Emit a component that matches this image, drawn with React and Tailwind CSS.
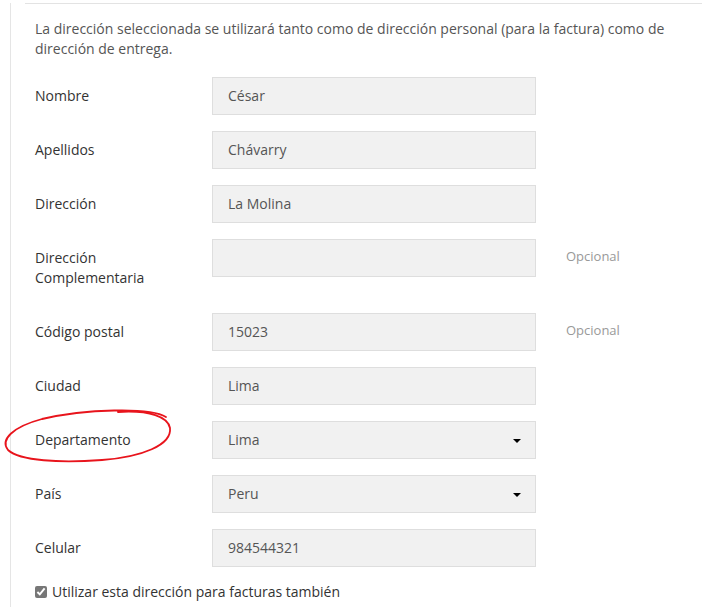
import { useState } from "react";

const campos = [
    { label: "Nombre", value: "César" },
    { label: "Apellidos", value: "Chávarry" },
    { label: "Dirección", value: "La Molina" },
    { label: "Dirección Complementaria", value: "", opcional: true, alto: true },
    { label: "Código postal", value: "15023", opcional: true },
    { label: "Ciudad", value: "Lima" },
    { label: "Departamento", value: "Lima", select: true },
    { label: "País", value: "Peru", select: true },
    { label: "Celular", value: "984544321" },
];

function Campo({ campo }) {
    return (
        <div className={`flex items-start ${campo.alto ? "h-[58px] mb-[16px]" : "mb-[16px]"}`}>
            <label className="w-[177px] pt-[9px] pr-4 leading-[20px] text-[#333]">
                {campo.label}
            </label>
            <div className="relative w-[324px] h-[38px] bg-[#f1f1f1] border border-[#dedede] flex items-center pl-[15px] text-[#555]">
                <span className="leading-[20px]">{campo.value}</span>
                {campo.select && (
                    <span className="absolute right-[14px] top-[17px] w-0 h-0 border-l-[4px] border-r-[4px] border-t-[4px] border-l-transparent border-r-transparent border-t-black" />
                )}
            </div>
            {campo.opcional && (
                <span className="ml-[30px] pt-[7px] text-[13px] leading-[20px] text-[#999]">Opcional</span>
            )}
        </div>
    );
}

export default function App() {
    const [facturas, setFacturas] = useState(true);

    return (
        <div className="relative w-[702px] h-[607px] overflow-hidden bg-white text-[14px] font-['Open_Sans',sans-serif]">
            <div className="ml-[10px] h-full border-l border-[#e5e5e5] pl-[14px]">
                <div className="mt-[3px] border-t border-[#e3e3e3] pl-[10px] pt-[15px]">
                    <p className="leading-[20px] text-[#555] pr-4">
                        La dirección seleccionada se utilizará tanto como de dirección personal (para la factura) como de dirección de entrega.
                    </p>

                    <div className="mt-[18px]">
                        {campos.map((c) => (
                            <Campo key={c.label} campo={c} />
                        ))}
                    </div>

                    <label className="flex items-center gap-[5px] -mt-[1px] leading-[20px] text-[#333]">
                        <input
                            type="checkbox"
                            checked={facturas}
                            onChange={(e) => setFacturas(e.target.checked)}
                            className="m-0 w-[12px] h-[12px] accent-[#777]"
                        />
                        Utilizar esta dirección para facturas también
                    </label>
                </div>
            </div>

            {/* marca roja hecha a mano */}
            <svg className="absolute left-0 top-0 pointer-events-none" width="702" height="607" viewBox="0 0 702 607">
                <path
                    d="M 166 417 C 150 407, 85 409, 42 419 C 12 427, 0 440, 8 450 C 20 461, 60 463, 102 460 C 142 457, 172 445, 170 428 C 168 417, 150 410, 118 412"
                    fill="none"
                    stroke="#e8141c"
                    strokeWidth="1.8"
                    strokeLinecap="round"
                />
            </svg>
        </div>
    );
}
